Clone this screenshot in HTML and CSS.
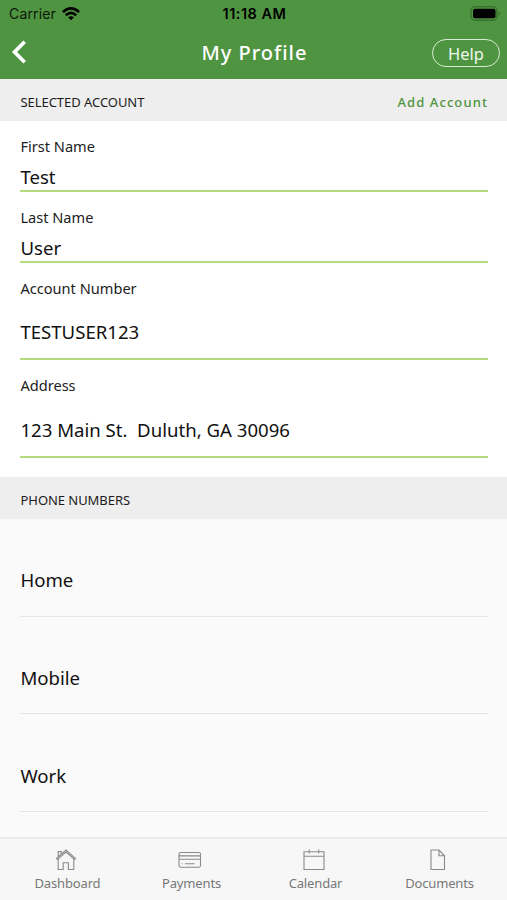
FILE: index.html
```html
<!DOCTYPE html>
<html lang="en">
<head>
<meta charset="utf-8">
<title>My Profile</title>
<link rel="stylesheet" href="styles.css">
</head>
<body>
<div class="app">
  <header class="header">
    <div class="status">
      <div class="carrier"><span>Carrier</span>
        <svg width="18" height="14" viewBox="0 0 18 14"><g fill="none" stroke="#000" stroke-width="2.6"><path d="M.9 5.1Q9-2.3 17.1 5.1"/><path d="M3.8 8.2Q9 3.6 14.2 8.2"/></g><path d="M6.1 10.3Q9 8 11.9 10.3L9 13.3Z"/></svg>
      </div>
      <div class="time">11:18 AM</div>
      <svg class="battery" width="31" height="15" viewBox="0 0 31 15"><rect x="1" y=".8" width="26" height="13.4" rx="4" fill="none" stroke="#397030" stroke-width="1.4"/><rect x="3" y="2.8" width="22.5" height="9.4" rx="2"/><path d="M28.7 5.2Q31.3 7.5 28.7 9.8Z" fill="#397030"/></svg>
    </div>
    <div class="nav">
      <svg class="back" width="16" height="24" viewBox="0 0 16 24"><path d="M13.7 1.7 3.5 12l10.2 10.3" fill="none" stroke="#fff" stroke-width="3.7"/></svg>
      <h1 class="title">My Profile</h1>
      <button class="help">Help</button>
    </div>
  </header>
  <main class="content">
    <div class="section"><h2 class="section-title">SELECTED ACCOUNT</h2><a class="add">Add Account</a></div>
    <div class="fields">
      <div class="field"><label class="label">First Name</label><div class="value">Test</div></div>
      <div class="field"><label class="label">Last Name</label><div class="value">User</div></div>
      <div class="field tall"><label class="label">Account Number</label><div class="value">TESTUSER123</div></div>
      <div class="field tall"><label class="label">Address</label><div class="value address">123 Main St.&nbsp; Duluth, GA 30096</div></div>
    </div>
    <div class="section"><h2 class="section-title">PHONE NUMBERS</h2></div>
    <div class="phones">
      <div class="phone">Home</div>
      <div class="phone">Mobile</div>
      <div class="phone">Work</div>
    </div>
  </main>
  <nav class="tabs">
    <div class="tab"><svg width="22" height="22" viewBox="0 0 22 22"><path d="M3.2 10.2V20.5H8.2v-6.8h5.2v6.8h5.4V10.2M1.5 9.5 11 1l9.5 8.5-1 1.1L11 3.1l-8.5 7.5ZM3.2 7.5V2.6h3v2.3"/></svg><span>Dashboard</span></div>
    <div class="tab"><svg width="24" height="22" viewBox="0 0 24 22"><rect x="1" y="3.5" width="21.5" height="14.7" rx="1.6"/><path d="M1 6.9h21.5M1 10.2h21.5M3.5 14.8h1.2M7 14.8h9.5"/></svg><span>Payments</span></div>
    <div class="tab"><svg width="22" height="22" viewBox="0 0 22 22"><path d="M1 2.7h20v17.8H1ZM1 7.3h20M6.3.5v4M15.7.5v4"/></svg><span>Calendar</span></div>
    <div class="tab"><svg width="16" height="22" viewBox="0 0 16 22"><path d="M1 1h8l5.5 5.8v13.7H1ZM9 1v5.8h5.5"/></svg><span>Documents</span></div>
  </nav>
</div>
</body>
</html>
```

FILE: styles.css
```css
* { box-sizing: border-box; }
body { margin: 0; font-family: "Noto Sans", sans-serif; color: #1c1c1c; background: #fafafa; }
.app { width: 507px; height: 900px; display: flex; flex-direction: column; overflow: hidden; }
svg { display: block; }
.header { height: 79px; flex: none; background: #4f9440; }
.status { height: 27px; display: grid; grid-template-columns: 1fr auto 1fr; align-items: center; padding: 0 6px 0 9px; font-family: Inter, sans-serif; font-size: 14px; line-height: 27px; color: #0b1809; }
.carrier { display: flex; align-items: center; gap: 6px; letter-spacing: .15px; }
.time { font-weight: 600; color: #000; font-size: 14.5px; letter-spacing: .5px; margin-right: 1px; }
.battery { justify-self: end; }
.nav { height: 52px; display: grid; grid-template-columns: 1fr auto 1fr; align-items: center; padding: 0 7px 0 11px; color: #fff; }
.back { position: relative; top: -1px; }
.title { margin: 0 2px 0 0; font-size: 20px; line-height: 52px; font-weight: 500; letter-spacing: 1px; }
.help { justify-self: end; width: 68px; height: 28px; padding: 2px 0 0; border: 1.5px solid #d9ead4; border-radius: 14px; background: none; color: #f0f8ee; font: 16.5px/22px "Noto Sans", sans-serif; }
.section { height: 42px; flex: none; display: flex; justify-content: space-between; align-items: center; padding: 4px 19px 0 20.5px; background: #eee; }
.section-title { margin: 0; font-size: 13px; font-weight: 400; letter-spacing: -.05px; }
.add { color: #4f9440; font-size: 13px; font-weight: 500; letter-spacing: 1.1px; }
.fields { height: 356px; padding: 0 19px 0 20.4px; background: #fff; }
.field { height: 71px; padding-top: 15px; display: flex; flex-direction: column; border-bottom: 2px solid #b5da80; }
.field.tall { height: 98px; }
.field.tall:nth-child(3) { height: 97px; }
.label { font-size: 14.6px; line-height: 20px; }
.value { font-size: 18.6px; line-height: 26px; margin-top: 8px; color: #111; }
.tall .value { margin-top: 21px; }
.field.tall:nth-child(4) .value { margin-top: 22px; }
.phones { padding: 0 19px 0 20.4px; }
.phone { height: 97.7px; border-bottom: 1.5px solid #e5e5e5; padding-top: 47.4px; font-size: 18.6px; line-height: 28px; color: #111; }
.content { flex: 1; min-height: 0; overflow: hidden; }
.tabs { height: 63px; flex: none; display: grid; grid-template-columns: 135px 113px 135px 113px; padding-top: 10px; border-top: 2px solid #ececec; background: #f7f7f7; color: #777; }
.tab { display: flex; flex-direction: column; align-items: center; font-size: 13px; line-height: 20px; gap: 2px; letter-spacing: -.15px; }
.tab svg { fill: none; stroke: #8a8a8a; stroke-width: 1.1; margin-right: 4px; }
```
